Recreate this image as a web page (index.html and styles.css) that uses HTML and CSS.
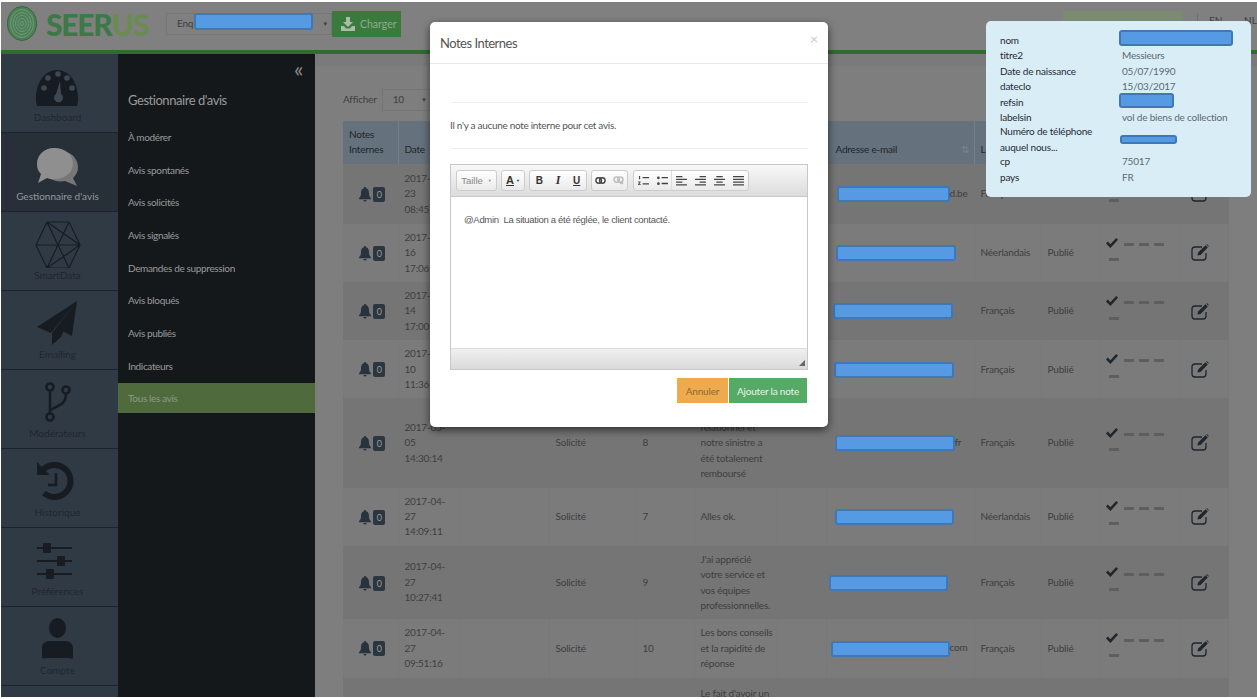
FILE: index.html
```html
<!DOCTYPE html>
<html lang="fr">
<head>
    <meta charset="UTF-8">
    <title>Seerus - Gestionnaire d'avis</title>
    <link rel="stylesheet" href="styles.css">
</head>
<body>
    <svg class="sprites" width="0" height="0">
        <symbol id="bell" viewBox="0 0 12 15">
            <path d="M6 0a1.2 1.2 0 0 1 1.2 1.3C9.600 1.900 10 4 10 6.500c0 2.500.8 3.600 2 4.700v1H0v-1c1.200-1.100 2-2.200 2-4.700 0-2.500.4-4.600 2.800-5.200A1.200 1.200 0 0 1 6 0zM4.400 13h3.200a1.600 1.600 0 0 1-3.200 0z"/>
        </symbol>
        <symbol id="edit" viewBox="0 0 18 17">
            <path class="edit-box" d="M11 3H4a3 3 0 0 0-3 3v7a3 3 0 0 0 3 3h8a3 3 0 0 0 3-3V9"/>
            <path d="M6.500 11.500l.6-3 7.400-7.300 2.300 2.300-7.300 7.400zM15.300.6l.6-.5 1.900 1.900-.5.7z"/>
        </symbol>
        <symbol id="check" viewBox="0 0 12 10">
            <path d="M0 5.400 1.800 3.600 4.400 6.200 10.200 0 12 1.800 4.400 10z"/>
        </symbol>
        <symbol id="list-ol" viewBox="0 0 12 11">
            <path d="M5 1h7v1.400H5zM5 8h7v1.400H5zM1 0h1.300v3.600H1zM0 6h2.800v1L1.400 9h1.600v1H0V9l1.500-2H0z"/>
        </symbol>
        <symbol id="list-ul" viewBox="0 0 12 11">
            <circle cx="1.500" cy="2" r="1.500"/><circle cx="1.500" cy="8.500" r="1.500"/>
            <path d="M5 1h7v1.600H5zM5 7.500h7v1.600H5z"/>
        </symbol>
        <symbol id="align-left" viewBox="0 0 12 11">
            <path d="M0 0h7v1.500H0zM0 3h12v1.500H0zM0 6h7v1.500H0zM0 9h12v1.500H0z"/>
        </symbol>
        <symbol id="align-right" viewBox="0 0 12 11">
            <path d="M5 0h7v1.500H5zM0 3h12v1.500H0zM5 6h7v1.500H5zM0 9h12v1.500H0z"/>
        </symbol>
        <symbol id="align-center" viewBox="0 0 12 11">
            <path d="M2.500 0h7v1.500h-7zM0 3h12v1.500H0zM2.500 6h7v1.500h-7zM0 9h12v1.500H0z"/>
        </symbol>
        <symbol id="align-justify" viewBox="0 0 12 11">
            <path d="M0 0h12v1.500H0zM0 3h12v1.500H0zM0 6h12v1.500H0zM0 9h12v1.500H0z"/>
        </symbol>
    </svg>

    <div class="app">
        <header class="topbar">
            <svg class="logo-mark" viewBox="0 0 30 35">
                <ellipse cx="15" cy="17.500" rx="14.500" ry="17" fill="#4d8058" stroke="#2f6a3c"/>
                <ellipse cx="15" cy="17.500" rx="11.500" ry="14" fill="none" stroke="#6f9a77"/>
                <ellipse cx="15" cy="17.500" rx="9" ry="11" fill="none" stroke="#6f9a77"/>
                <ellipse cx="15" cy="17.500" rx="6.500" ry="8" fill="none" stroke="#6f9a77"/>
                <ellipse cx="15" cy="17.500" rx="4" ry="5" fill="none" stroke="#6f9a77"/>
                <ellipse cx="15" cy="17.500" rx="1.500" ry="2" fill="none" stroke="#6f9a77"/>
            </svg>
            <div class="logo-text">SEER<span>US</span></div>
            <div class="survey-select">
                <span>Enq</span>
                <span class="mask mask-survey"></span>
                <span class="caret">▼</span>
            </div>
            <button class="load-btn">
                <svg class="load-icon" viewBox="0 0 14 14">
                    <path d="M5 0h4v5h3L7 10 2 5h3zM0 9h3l2 2.500h4L11 9h3v5H0z"/>
                </svg>
                Charger
            </button>
            <div class="top-right">
                <button class="activity-btn">Mon activité</button>
                <span class="lang lang-first">EN</span>
                <span class="lang">NL</span>
            </div>
        </header>

        <div class="main">
            <nav class="rail">
                <a class="rail-item">
                    <svg viewBox="0 0 117 56">
                        <path class="ico" d="M36 52a20 20 0 0 1-1-8C35 28 44 16 56 16s21 12 21 28a20 20 0 0 1-1 8z"/>
                        <g class="ico-dot">
                            <circle cx="43" cy="34" r="2.800"/><circle cx="47" cy="24" r="2.800"/><circle cx="57" cy="20" r="2.800"/>
                            <circle cx="66" cy="24" r="2.800"/><circle cx="71" cy="34" r="2.800"/>
                            <path d="M59 27l1 13a4.500 4.500 0 1 1-5 0z"/>
                        </g>
                    </svg>
                    <span>Dashboard</span>
                </a>
                <a class="rail-item active">
                    <svg viewBox="0 0 117 56">
                        <path class="ico-back" d="M66 19c6 2 11 8 11 15 0 5-2 8-5 11l4 8-12-5c-6 1-12 0-16-3 12 0 22-8 22-18a14 14 0 0 0-4-8z"/>
                        <path class="ico-front" d="M53 15c12 0 19 7 19 16s-9 15-19 15c-3 0-5 0-7-1l-9 5 3-9c-3-3-4-6-4-10 0-9 7-16 17-16z"/>
                    </svg>
                    <span>Gestionnaire d'avis</span>
                </a>
                <a class="rail-item">
                    <svg viewBox="0 0 117 56">
                        <path class="ico-line" d="M35 33 46 10h22l11 23-11 23H46zM46 10l22 46M68 10 46 56M35 33h44M46 10l33 23M46 56l33-23"/>
                    </svg>
                    <span>SmartData</span>
                </a>
                <a class="rail-item">
                    <svg viewBox="0 0 117 56">
                        <path class="ico" d="M76 10 36 36l14 6zM76 10 59 39l12 6zM76 10 51 42v12l9-8z"/>
                    </svg>
                    <span>Emailing</span>
                </a>
                <a class="rail-item">
                    <svg viewBox="0 0 117 56">
                        <circle class="ico-ring" cx="49" cy="17" r="3.500"/>
                        <circle class="ico-ring" cx="65" cy="20" r="3.500"/>
                        <circle class="ico-ring" cx="49" cy="47" r="3.500"/>
                        <path class="ico-stroke" d="M49 21v22M65 24c0 9-5 11-16 16"/>
                    </svg>
                    <span>Modérateurs</span>
                </a>
                <a class="rail-item">
                    <svg viewBox="0 0 117 56">
                        <path class="ico-stroke-wide" d="M41 22a16 16 0 1 1 2 22"/>
                        <path class="ico" d="M36 13l13 13H36z"/>
                        <path class="ico-stroke" d="M55 24v12H47"/>
                    </svg>
                    <span>Historique</span>
                </a>
                <a class="rail-item">
                    <svg viewBox="0 0 117 56">
                        <path class="ico-stroke-thin" d="M36 20h35M36 33h35M36 46h35"/>
                        <rect class="ico" x="42" y="15" width="8" height="10" rx="1"/>
                        <rect class="ico" x="56" y="28" width="8" height="10" rx="1"/>
                        <rect class="ico" x="45" y="41" width="8" height="10" rx="1"/>
                    </svg>
                    <span>Préférences</span>
                </a>
                <a class="rail-item">
                    <svg viewBox="0 0 117 56">
                        <ellipse class="ico" cx="56.500" cy="21" rx="8.500" ry="10"/>
                        <path class="ico" d="M41 51V41c0-4 3-7 8-7h15c5 0 8 3 8 7v10a4 4 0 0 1-4 0H45a4 4 0 0 1-4 0z"/>
                    </svg>
                    <span>Compte</span>
                </a>
            </nav>

            <aside class="submenu">
                <div class="collapse">«</div>
                <h2>Gestionnaire d'avis</h2>
                <ul>
                    <li>À modérer</li>
                    <li>Avis spontanés</li>
                    <li>Avis solicités</li>
                    <li>Avis signalés</li>
                    <li>Demandes de suppression</li>
                    <li>Avis bloqués</li>
                    <li>Avis publiés</li>
                    <li>Indicateurs</li>
                    <li class="current">Tous les avis</li>
                </ul>
            </aside>

            <section class="content">
                <div class="length-row">
                    <span>Afficher</span>
                    <span class="length-select">10<i>▼</i></span>
                </div>
                <table class="reviews">
                    <colgroup>
                        <col class="c-notes"><col class="c-date"><col class="c-blank"><col class="c-type">
                        <col class="c-score"><col class="c-comment"><col class="c-extra"><col class="c-mail">
                        <col class="c-lang"><col class="c-status"><col class="c-steps"><col class="c-edit">
                    </colgroup>
                    <thead>
                        <tr>
                            <th>Notes Internes</th><th>Date</th><th></th><th>Type</th><th>Note</th><th>Commentaire</th><th></th>
                            <th class="th-sort">Adresse e-mail<i>⇅</i></th><th>Langue</th><th>Statut</th><th></th><th></th>
                        </tr>
                    </thead>
                    <tbody>
                        <tr class="tall">
                            <td class="notes"><svg class="bell"><use href="#bell"/></svg><b class="badge">0</b></td>
                            <td>2017-04-23 08:45:12</td><td></td><td>Solicité</td><td>9</td><td class="comment">Très bien.</td><td></td>
                            <td class="mail"><span class="mask mask-r1"></span>d.be</td>
                            <td>Français</td><td>Publié</td>
                            <td class="steps"><svg class="check"><use href="#check"/></svg><i></i><i></i><i></i><i></i></td>
                            <td><svg class="edit"><use href="#edit"/></svg></td>
                        </tr>
                        <tr>
                            <td class="notes"><svg class="bell"><use href="#bell"/></svg><b class="badge">0</b></td>
                            <td>2017-04-16 17:06:40</td><td></td><td>Solicité</td><td>8</td><td class="comment">Prima.</td><td></td>
                            <td class="mail"><span class="mask mask-r2"></span></td>
                            <td>Néerlandais</td><td>Publié</td>
                            <td class="steps"><svg class="check"><use href="#check"/></svg><i></i><i></i><i></i><i></i></td>
                            <td><svg class="edit"><use href="#edit"/></svg></td>
                        </tr>
                        <tr>
                            <td class="notes"><svg class="bell"><use href="#bell"/></svg><b class="badge">0</b></td>
                            <td>2017-04-14 17:00:31</td><td></td><td>Solicité</td><td>9</td><td class="comment">Très bien.</td><td></td>
                            <td class="mail"><span class="mask mask-r3"></span></td>
                            <td>Français</td><td>Publié</td>
                            <td class="steps"><svg class="check"><use href="#check"/></svg><i></i><i></i><i></i><i></i></td>
                            <td><svg class="edit"><use href="#edit"/></svg></td>
                        </tr>
                        <tr>
                            <td class="notes"><svg class="bell"><use href="#bell"/></svg><b class="badge">0</b></td>
                            <td>2017-04-10 11:36:02</td><td></td><td>Solicité</td><td>9</td><td class="comment">Très bien.</td><td></td>
                            <td class="mail"><span class="mask mask-r4"></span></td>
                            <td>Français</td><td>Publié</td>
                            <td class="steps"><svg class="check"><use href="#check"/></svg><i></i><i></i><i></i><i></i></td>
                            <td><svg class="edit"><use href="#edit"/></svg></td>
                        </tr>
                        <tr>
                            <td class="notes"><svg class="bell"><use href="#bell"/></svg><b class="badge">0</b></td>
                            <td>2017-05-05 14:30:14</td><td></td><td>Solicité</td><td>8</td>
                            <td class="comment">Très bon contact relationnel et notre sinistre a été totalement remboursé</td><td></td>
                            <td class="mail"><span class="mask mask-r5"></span>fr</td>
                            <td>Français</td><td>Publié</td>
                            <td class="steps"><svg class="check"><use href="#check"/></svg><i></i><i></i><i></i><i></i></td>
                            <td><svg class="edit"><use href="#edit"/></svg></td>
                        </tr>
                        <tr>
                            <td class="notes"><svg class="bell"><use href="#bell"/></svg><b class="badge">0</b></td>
                            <td>2017-04-27 14:09:11</td><td></td><td>Solicité</td><td>7</td><td class="comment">Alles ok.</td><td></td>
                            <td class="mail"><span class="mask mask-r6"></span></td>
                            <td>Néerlandais</td><td>Publié</td>
                            <td class="steps"><svg class="check"><use href="#check"/></svg><i></i><i></i><i></i><i></i></td>
                            <td><svg class="edit"><use href="#edit"/></svg></td>
                        </tr>
                        <tr>
                            <td class="notes"><svg class="bell"><use href="#bell"/></svg><b class="badge">0</b></td>
                            <td>2017-04-27 10:27:41</td><td></td><td>Solicité</td><td>9</td>
                            <td class="comment">J'ai apprécié votre service et vos équipes professionnelles.</td><td></td>
                            <td class="mail"><span class="mask mask-r7"></span></td>
                            <td>Français</td><td>Publié</td>
                            <td class="steps"><svg class="check"><use href="#check"/></svg><i></i><i></i><i></i><i></i></td>
                            <td><svg class="edit"><use href="#edit"/></svg></td>
                        </tr>
                        <tr>
                            <td class="notes"><svg class="bell"><use href="#bell"/></svg><b class="badge">0</b></td>
                            <td>2017-04-27 09:51:16</td><td></td><td>Solicité</td><td>10</td>
                            <td class="comment">Les bons conseils et la rapidité de réponse</td><td></td>
                            <td class="mail"><span class="mask mask-r8"></span>com</td>
                            <td>Français</td><td>Publié</td>
                            <td class="steps"><svg class="check"><use href="#check"/></svg><i></i><i></i><i></i><i></i></td>
                            <td><svg class="edit"><use href="#edit"/></svg></td>
                        </tr>
                        <tr>
                            <td></td><td></td><td></td><td></td><td></td>
                            <td class="comment last-comment">Le fait d'avoir un</td>
                            <td></td><td></td><td></td><td></td><td></td><td></td>
                        </tr>
                    </tbody>
                </table>
            </section>
        </div>

        <div class="modal">
            <div class="modal-head">
                <h3>Notes Internes</h3>
                <span class="close">×</span>
            </div>
            <div class="modal-body">
                <p class="no-notes">Il n'y a aucune note interne pour cet avis.</p>
                <div class="editor">
                    <div class="toolbar">
                        <div class="tool-group"><span class="tool size-tool">Taille<i class="tool-caret">▼</i></span></div>
                        <div class="tool-group"><span class="tool color-tool"><u>A</u><i class="tool-caret">▼</i></span></div>
                        <div class="tool-group group-style">
                            <span class="tool"><b>B</b></span>
                            <span class="tool tool-i">I</span>
                            <span class="tool"><b><u>U</u></b></span>
                        </div>
                        <div class="tool-group group-link">
                            <span class="tool">
                                <svg class="tool-link" viewBox="0 0 12 8">
                                    <rect x="1" y="1" width="6" height="6" rx="3"/><rect x="5" y="1" width="6" height="6" rx="3"/>
                                </svg>
                            </span>
                            <span class="tool tool-off">
                                <svg class="tool-link" viewBox="0 0 12 10">
                                    <rect x="1" y="1" width="6" height="6" rx="3"/><rect x="5" y="1" width="6" height="6" rx="3"/><path d="M8 6l3 3M11 6 8 9"/>
                                </svg>
                            </span>
                        </div>
                        <div class="tool-group group-para">
                            <span class="tool"><svg class="tool-ico"><use href="#list-ol"/></svg></span>
                            <span class="tool tool-sep"><svg class="tool-ico"><use href="#list-ul"/></svg></span>
                            <span class="tool"><svg class="tool-ico"><use href="#align-left"/></svg></span>
                            <span class="tool"><svg class="tool-ico"><use href="#align-right"/></svg></span>
                            <span class="tool"><svg class="tool-ico"><use href="#align-center"/></svg></span>
                            <span class="tool"><svg class="tool-ico"><use href="#align-justify"/></svg></span>
                        </div>
                    </div>
                    <div class="editor-area">@Admin&nbsp; La situation a été réglée, le client contacté.</div>
                    <div class="editor-foot"><span class="grip"></span></div>
                </div>
                <div class="modal-actions">
                    <button class="btn-cancel">Annuler</button>
                    <button class="btn-add">Ajouter la note</button>
                </div>
            </div>
        </div>

        <dl class="info-popup">
            <dt>nom</dt><dd><span class="mask mask-name"></span></dd>
            <dt>titre2</dt><dd>Messieurs</dd>
            <dt>Date de naissance</dt><dd>05/07/1990</dd>
            <dt>dateclo</dt><dd>15/03/2017</dd>
            <dt>refsin</dt><dd><span class="mask mask-ref"></span></dd>
            <dt>labelsin</dt><dd>vol de biens de collection</dd>
            <dt>Numéro de téléphone auquel nous...</dt><dd><span class="mask mask-phone"></span></dd>
            <dt>cp</dt><dd>75017</dd>
            <dt>pays</dt><dd>FR</dd>
        </dl>
    </div>
</body>
</html>
```

FILE: styles.css
```css
* {
    box-sizing: border-box;
}

html, body {
    height: 100%;
}

body {
    margin: 0;
    background: #fff;
    font-family: 'Lato', sans-serif;
    font-size: 10px;
    line-height: 15.4px;
    letter-spacing: -0.2px;
    color: #3e3e3e;
}

.sprites {
    position: absolute;
}

.app {
    position: relative;
    height: 695px;
    margin: 2px 0 0 1px;
    overflow: hidden;
    background: #7d7d7d;
}

/* blue boxes that hide personal data */
.mask {
    display: inline-block;
    height: 16px;
    vertical-align: middle;
    background: #559ae2;
    border: 2px solid #3f78b4;
    border-radius: 3px;
}

/* top bar */
.topbar {
    display: flex;
    align-items: center;
    height: 52px;
    padding: 0 0 5px 6px;
    background: #808080;
    border-bottom: 4px solid #2f6c30;
}

.logo-mark {
    width: 30px;
    height: 35px;
    margin-right: 9px;
}

.logo-text {
    width: 120px;
    font-size: 30px;
    font-weight: 900;
    line-height: 34px;
    letter-spacing: -1.2px;
    color: #3b7a47;
}

.logo-text span {
    color: #6a8c50;
}

.survey-select {
    display: flex;
    align-items: center;
    width: 166px;
    height: 22px;
    padding-left: 10px;
    border: 1px solid #767676;
    color: #3e3e3e;
}

.survey-select .mask {
    width: 119px;
    height: 17px;
    margin: -4px 0 0 1px;
}

.caret {
    margin-left: 9px;
    font-size: 6px;
}

.load-btn {
    display: flex;
    align-items: center;
    gap: 5px;
    width: 69px;
    height: 26px;
    padding: 0 0 0 9px;
    border: 0;
    background: #3a7b3d;
    color: #91aa92;
    font: 10.5px 'Lato', sans-serif;
}

.load-icon {
    width: 14px;
    height: 14px;
    fill: #a8bca8;
}

.top-right {
    display: flex;
    align-items: flex-start;
    align-self: flex-start;
    margin-left: auto;
    padding-top: 9px;
}

.activity-btn {
    width: 119px;
    height: 28px;
    border: 0;
    background: #7a8b72;
    color: #4a5546;
    font: 11px 'Lato', sans-serif;
}

.lang {
    width: 13px;
    margin-top: 2px;
    letter-spacing: 0;
    color: #3e3e3e;
}

.lang-first {
    width: 47px;
    margin-left: 15px;
    padding-left: 11px;
    border-left: 1px solid #707070;
}

/* left rail */
.main {
    display: flex;
    height: 643px;
}

.rail {
    flex: none;
    width: 117px;
    background: #303a45;
    letter-spacing: 0;
}

.rail-item {
    display: block;
    height: 79px;
    border-bottom: 1px solid #1c232a;
    text-align: center;
    color: #1f272e;
}

.rail-item svg {
    display: block;
    width: 117px;
    height: 56px;
}

.rail-item span {
    display: block;
    padding-right: 4px;
}

.rail-item.active {
    background: #272f38;
    color: #94999d;
}

.ico {
    fill: #161c22;
}

.ico-dot {
    fill: #3d4853;
}

.ico-front {
    fill: #8f8f8f;
}

.ico-back {
    fill: #777;
}

.ico-line, .ico-stroke, .ico-ring, .ico-stroke-wide, .ico-stroke-thin {
    fill: none;
    stroke: #161c22;
}

.ico-line {
    stroke-width: 1.2;
}

.ico-stroke, .ico-ring {
    stroke-width: 2.6;
}

.ico-stroke-wide {
    stroke-width: 6;
}

.ico-stroke-thin {
    stroke-width: 2;
}

/* second menu */
.submenu {
    flex: none;
    position: relative;
    width: 197px;
    padding-top: 36px;
    background: #14181b;
    color: #9a9a9a;
    letter-spacing: -0.35px;
}

.collapse {
    position: absolute;
    top: 3px;
    right: 12px;
    font-size: 22px;
    line-height: 24px;
    color: #888;
}

.submenu h2 {
    margin: 0 0 11px 10px;
    font-size: 13px;
    line-height: 20px;
    font-weight: 400;
    letter-spacing: -0.45px;
}

.submenu ul {
    margin: 0;
    padding: 0;
    list-style: none;
}

.submenu li {
    height: 32.7px;
    padding-left: 10px;
    line-height: 32.7px;
}

.submenu li.current {
    height: 30px;
    line-height: 30px;
    background: #4f6a3d;
    color: #8c9c80;
}

/* reviews table */
.content {
    flex: 1;
    min-width: 0;
    margin-left: 1px;
    padding: 35px 0 0 27px;
    background: linear-gradient(#7a7a7a 12px, #7e7e7e 12px);
}

.length-row {
    display: flex;
    align-items: center;
    gap: 5px;
    height: 22px;
    margin-bottom: 10px;
}

.length-select {
    display: flex;
    justify-content: space-between;
    align-items: center;
    width: 50px;
    height: 22px;
    padding: 0 4px 0 10px;
    border: 1px solid #757575;
}

.length-select i {
    font-style: normal;
    font-size: 6px;
}

.reviews {
    width: 885px;
    table-layout: fixed;
    border-collapse: collapse;
}

.c-notes { width: 55px; }
.c-date { width: 61px; }
.c-blank { width: 90px; }
.c-type { width: 87px; }
.c-score { width: 58px; }
.c-comment { width: 83px; }
.c-extra { width: 49px; }
.c-mail { width: 148px; }
.c-lang { width: 67px; }
.c-status { width: 58px; }
.c-steps { width: 80px; }
.c-edit { width: 49px; }

.reviews th {
    height: 42px;
    padding: 6px;
    text-align: left;
    vertical-align: bottom;
    font-weight: 400;
    color: #20252a;
    background: #65717c;
    border-right: 1px solid #74808a;
}

.reviews th.th-sort {
    position: relative;
    padding-left: 9px;
}

.th-sort i {
    position: absolute;
    right: 5px;
    bottom: 6px;
    font-style: normal;
    color: #7a858e;
}

.reviews td {
    padding: 6px;
    vertical-align: middle;
    border-right: 1px solid #787878;
    background: #7b7b7b;
}

.reviews tbody tr:nth-child(odd) td {
    background: #757575;
    border-right-color: #757575;
}

.reviews tr.tall td {
    height: 60px;
}

.reviews td.notes {
    padding: 6px 0 6px 4px;
    text-align: center;
    white-space: nowrap;
}

.bell {
    width: 12px;
    height: 15px;
    vertical-align: middle;
    fill: #29333d;
}

.badge {
    display: inline-block;
    width: 12px;
    height: 15px;
    margin-left: 2px;
    vertical-align: middle;
    border-radius: 2px;
    background: #2b3640;
    color: #9a9a9a;
    font-size: 9px;
    font-weight: 400;
    line-height: 15px;
}

.reviews td.comment {
    padding-right: 3px;
}

.reviews td.mail {
    padding-left: 8px;
    padding-right: 0;
    white-space: nowrap;
}

.reviews td.last-comment {
    padding-top: 8px;
    vertical-align: top;
    white-space: nowrap;
}

.mask-r1 { width: 113px; margin-left: 2px; }
.mask-r2 { width: 120px; margin-left: 1px; }
.mask-r3 { width: 120px; margin-left: -2px; }
.mask-r4 { width: 120px; margin-left: -1px; }
.mask-r5 { width: 120px; }
.mask-r6 { width: 119px; }
.mask-r7 { width: 119px; margin-left: -6px; }
.mask-r8 { width: 119px; margin-left: -4px; }

.steps i {
    display: inline-block;
    width: 10px;
    height: 3px;
    margin: 0 2px 3px 3px;
    vertical-align: middle;
    background: #5e5e5e;
}

.check {
    width: 12px;
    height: 10px;
    margin-right: 3px;
    fill: #20262c;
    vertical-align: 1px;
}

.edit {
    display: block;
    width: 18px;
    height: 17px;
    margin-left: 5px;
    fill: #20262c;
}

.edit-box {
    fill: none;
    stroke: #20262c;
    stroke-width: 1.3;
}

/* modal */
.modal {
    position: absolute;
    top: 20px;
    left: 429px;
    width: 398px;
    height: 405px;
    border-radius: 5px;
    background: #fff;
    box-shadow: 0 3px 9px rgba(0, 0, 0, 0.6);
    color: #555;
}

.modal-head {
    position: relative;
    height: 42px;
    padding: 11px 10px 0;
    border-bottom: 1px solid #e8e8e8;
}

.modal-head h3 {
    margin: 0;
    font-size: 13px;
    line-height: 20px;
    font-weight: 400;
    letter-spacing: -0.5px;
}

.close {
    position: absolute;
    top: 9px;
    right: 10px;
    font-size: 14px;
    color: #c8c8c8;
}

.modal-body {
    padding: 38px 20px 0;
}

.no-notes {
    height: 47px;
    margin: 0 0 15px;
    padding-top: 15px;
    border-top: 1px solid #eee;
    border-bottom: 1px solid #eee;
    letter-spacing: -0.3px;
}

.editor {
    border: 1px solid #c8c8c8;
}

.toolbar {
    display: flex;
    gap: 4px;
    height: 32px;
    padding: 5px 0 0 5px;
    background: linear-gradient(#f8f8f8, #dcdcdc);
    border-bottom: 1px solid #c8c8c8;
}

.tool-group {
    display: flex;
    height: 21px;
    border: 1px solid #ccc;
    border-radius: 3px;
    background: linear-gradient(#fff, #eaeaea);
}

.tool {
    display: flex;
    justify-content: center;
    align-items: center;
    width: 19px;
    font-family: 'Liberation Sans', sans-serif;
    font-size: 10px;
    letter-spacing: 0;
    color: #333;
}

.group-style .tool {
    width: 18.7px;
}

.group-link .tool {
    width: 17.5px;
}

.group-para {
    margin-left: 1px;
}

.tool-ico {
    width: 11px;
    height: 10px;
    fill: #444;
}

.tool-sep {
    border-right: 1px solid #ddd;
}

.tool-i {
    font-family: 'Liberation Serif', serif;
    font-style: italic;
    font-weight: 700;
    font-size: 12px;
}

.tool-link {
    width: 11px;
    height: 9px;
    fill: none;
    stroke: #444;
    stroke-width: 1.5;
}

.tool-off .tool-link {
    stroke: #bbb;
}

.size-tool {
    gap: 5px;
    width: 39px;
    color: #888;
    font-size: 9.5px;
}

.color-tool {
    gap: 2px;
    width: 22px;
    font-weight: 700;
    font-size: 11px;
}

.tool-caret {
    font-style: normal;
    font-size: 4px;
}

.editor-area {
    height: 151px;
    padding: 15px 13px;
    background: #fff;
    font-family: 'Liberation Sans', sans-serif;
    font-size: 9.5px;
    letter-spacing: -0.3px;
    color: #555;
}

.editor-foot {
    position: relative;
    height: 21px;
    border-top: 1px solid #ddd;
    background: linear-gradient(#f0f0f0, #dadada);
}

.grip {
    position: absolute;
    right: 2px;
    bottom: 3px;
    width: 0;
    height: 0;
    border-left: 6px solid transparent;
    border-bottom: 6px solid #666;
}

.modal-actions {
    display: flex;
    justify-content: flex-end;
    gap: 1px;
    margin: 8px 1px 0 0;
}

.modal-actions button {
    height: 25px;
    border: 0;
    padding: 0;
    font: 10px 'Lato', sans-serif;
    letter-spacing: -0.2px;
}

.btn-cancel {
    width: 51px;
    background: #efaa4e;
    color: #8a6a33;
}

.btn-add {
    width: 78px;
    background: #57a966;
    color: #e6f5e6;
}

/* info popup */
.info-popup {
    position: absolute;
    top: 19px;
    left: 985px;
    display: grid;
    grid-template-columns: 122px 1fr;
    grid-auto-rows: minmax(15.3px, auto);
    align-items: center;
    width: 265px;
    height: 176px;
    margin: 0;
    padding: 12px 14px;
    border-radius: 5px;
    background: #d9edf7;
    color: #5c6a72;
}

.info-popup dt {
    color: #1f2a32;
}

.info-popup dd {
    margin: 0;
}

.info-popup .mask {
    display: block;
    margin: -6px 0 0 -3px;
}

.mask-name {
    width: 114px;
}

.info-popup .mask-ref {
    width: 55px;
    height: 15px;
    margin-top: -4px;
}

.info-popup .mask-phone {
    width: 57px;
    height: 9px;
    margin: 0 0 0 -2px;
}
```
